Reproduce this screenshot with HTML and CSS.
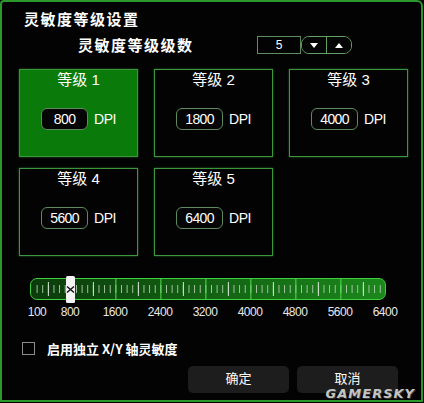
FILE: index.html
```html
<!DOCTYPE html>
<html lang="zh">
<head>
<meta charset="UTF-8">
<meta name="viewport" content="width=device-width, initial-scale=1.0">
<title>灵敏度等级设置</title>
<link rel="stylesheet" href="styles.css">
</head>
<body>
<div class="window">
    <h1 class="title">灵敏度等级设置</h1>

    <div class="count-row">
        <span class="count-label">灵敏度等级级数</span>
        <div class="spinner">
            <span class="spinner-value">5</span>
            <div class="spinner-btns">
                <button class="spin-btn"><svg width="8" height="5" viewBox="0 0 8 5"><path d="M0 0H8L4 5Z" fill="#fff"/></svg></button>
                <button class="spin-btn"><svg width="8" height="5" viewBox="0 0 8 5"><path d="M0 5H8L4 0Z" fill="#fff"/></svg></button>
            </div>
        </div>
    </div>

    <div class="levels">
        <div class="level active">
            <div class="level-name">等级 1</div>
            <div class="dpi-row"><span class="dpi-box">800</span><span class="dpi-unit">DPI</span></div>
        </div>
        <div class="level">
            <div class="level-name">等级 2</div>
            <div class="dpi-row"><span class="dpi-box">1800</span><span class="dpi-unit">DPI</span></div>
        </div>
        <div class="level">
            <div class="level-name">等级 3</div>
            <div class="dpi-row"><span class="dpi-box">4000</span><span class="dpi-unit">DPI</span></div>
        </div>
        <div class="level">
            <div class="level-name">等级 4</div>
            <div class="dpi-row"><span class="dpi-box">5600</span><span class="dpi-unit">DPI</span></div>
        </div>
        <div class="level">
            <div class="level-name">等级 5</div>
            <div class="dpi-row"><span class="dpi-box">6400</span><span class="dpi-unit">DPI</span></div>
        </div>
    </div>

    <div class="slider-wrap">
        <div class="slider">
            <div class="handle">
                <svg width="9" height="27" viewBox="0 0 9 27">
                    <rect x="0" y="0" width="9" height="27" rx="1.5" fill="#f4f4f4"/>
                    <path d="M1 10.5L8 16.5M8 10.5L1 16.5" stroke="#1a1a1a" stroke-width="1.6"/>
                </svg>
            </div>
        </div>
        <div class="scale">
            <span class="tick-label" style="left: 7px">100</span>
            <span class="tick-label" style="left: 40px">800</span>
            <span class="tick-label" style="left: 85px">1600</span>
            <span class="tick-label" style="left: 130px">2400</span>
            <span class="tick-label" style="left: 175px">3200</span>
            <span class="tick-label" style="left: 220px">4000</span>
            <span class="tick-label" style="left: 265px">4800</span>
            <span class="tick-label" style="left: 310px">5600</span>
            <span class="tick-label" style="left: 355px">6400</span>
        </div>
    </div>

    <label class="xy-row"><span class="checkbox"></span>启用独立 X/Y 轴灵敏度</label>

    <div class="actions">
        <button>确定</button>
        <button>取消</button>
    </div>

    <div class="watermark">GAMERSKY</div>
</div>
</body>
</html>
```

FILE: styles.css
```css
body {
    margin: 0;
    background-color: #000;
}
.window {
    position: relative;
    box-sizing: border-box;
    width: 423px;
    height: 402px;
    padding: 8px 0 0 17px;
    border: 2px solid #2a982a;
    border-radius: 4px 6px 0 0;
    background-color: #030303;
    color: #fff;
    font-family: "Liberation Sans", "Noto Sans CJK SC", sans-serif;
}
.title {
    margin: 0 0 0 5px;
    font-family: "Noto Sans CJK SC", sans-serif;
    font-size: 15px;
    line-height: 18px;
    font-weight: bold;
    letter-spacing: 1.5px;
}

/* 级数 */
.count-row {
    display: flex;
    align-items: center;
    height: 18px;
    margin-top: 8px;
}
.count-label {
    margin-left: 59px;
    font-family: "Noto Sans CJK SC", sans-serif;
    font-size: 15px;
    line-height: 18px;
    font-weight: bold;
    letter-spacing: 1.5px;
}
.spinner {
    display: flex;
    height: 18px;
    margin-left: auto;
    margin-right: 69px;
}
.spinner-value {
    box-sizing: border-box;
    width: 44px;
    height: 18px;
    border: 1px solid #5d8d5d;
    font-size: 12px;
    line-height: 16px;
    text-align: center;
}
.spinner-btns {
    display: flex;
    box-sizing: border-box;
    width: 51px;
    height: 18px;
    border: 1px solid #63a063;
    border-radius: 8px;
    overflow: hidden;
}
.spin-btn {
    flex: 1;
    display: flex;
    align-items: center;
    justify-content: center;
    padding: 0;
    border: none;
    background-color: #050505;
}
.spin-btn + .spin-btn {
    border-left: 1px solid #63a063;
}

/* 等级卡片 */
.levels {
    display: grid;
    grid-template-columns: repeat(3, 119px);
    grid-auto-rows: 88px;
    gap: 11px 16px;
    margin-top: 15px;
}
.level {
    box-sizing: border-box;
    border: 1px solid #3c963c;
    box-shadow: 0 0 2px rgba(70, 190, 70, 0.5);
    text-align: center;
}
.level.active {
    background-color: #0a7a0a;
}
.level-name {
    margin-top: 1px;
    font-size: 15px;
    line-height: 18px;
}
.dpi-row {
    display: flex;
    justify-content: center;
    align-items: center;
    gap: 6px;
    margin-top: 19px;
}
.dpi-box {
    box-sizing: border-box;
    width: 47px;
    height: 22px;
    border: 1px solid #5f8a5f;
    border-radius: 6px;
    background-color: #050505;
    font-size: 14px;
    line-height: 20px;
    letter-spacing: -0.6px;
}
.dpi-unit {
    font-size: 14px;
    letter-spacing: -0.5px;
}

/* 滑块 */
.slider-wrap {
    width: 356px;
    margin: 22px 0 0 11px;
}
.slider {
    position: relative;
    box-sizing: border-box;
    height: 22px;
    border: 1px solid #3fcf3f;
    border-radius: 7px;
    background: linear-gradient(90deg, #0b3b0b, #1b881b);
}
.slider::before {
    content: '';
    position: absolute;
    top: 0;
    bottom: 0;
    left: 3px;
    right: 0;
    background:
        linear-gradient(90deg, #4ee04e 0 1px, transparent 1px) 36.375px 0 / 45px 100% repeat-x,
        linear-gradient(90deg, #d2e2d2 0 1px, transparent 1px) 13.875px 3px / 45px 14px repeat-x,
        linear-gradient(90deg, #a9c4a9 0 1px, transparent 1px) 2.625px 6px / 5.625px 8px repeat-x;
}
.handle {
    position: absolute;
    left: 35px;
    top: -3px;
    width: 9px;
    height: 27px;
    z-index: 1;
}
.handle svg {
    display: block;
}
.scale {
    position: relative;
    height: 14px;
    margin-top: 5px;
}
.tick-label {
    position: absolute;
    top: 0;
    transform: translateX(-50%);
    font-size: 12px;
    line-height: 14px;
    letter-spacing: -0.5px;
    color: #e8e8e8;
}

.xy-row {
    display: flex;
    align-items: center;
    gap: 12px;
    height: 14px;
    margin: 22px 0 0 3px;
    font-family: "Noto Sans CJK SC", sans-serif;
    font-size: 13px;
    font-weight: bold;
}
.checkbox {
    box-sizing: border-box;
    width: 13px;
    height: 13px;
    border: 1px solid #8c8c8c;
}

.actions {
    display: flex;
    gap: 8px;
    margin: 11px 0 0 169px;
}
.actions button {
    width: 101px;
    height: 27px;
    padding: 0 0 4px;
    border: none;
    border-radius: 5px;
    background-color: #1d1d1d;
    color: #fff;
    font-family: "Noto Sans CJK SC", sans-serif;
    font-size: 13px;
    line-height: 13px;
}

.watermark {
    position: absolute;
    right: 6px;
    bottom: 1px;
    font-family: "DejaVu Sans", sans-serif;
    font-size: 13px;
    line-height: 10px;
    font-style: italic;
    font-weight: bold;
    letter-spacing: 1px;
    color: #c4c4c4;
    text-shadow: 1px 1px 0 #333;
}
```
